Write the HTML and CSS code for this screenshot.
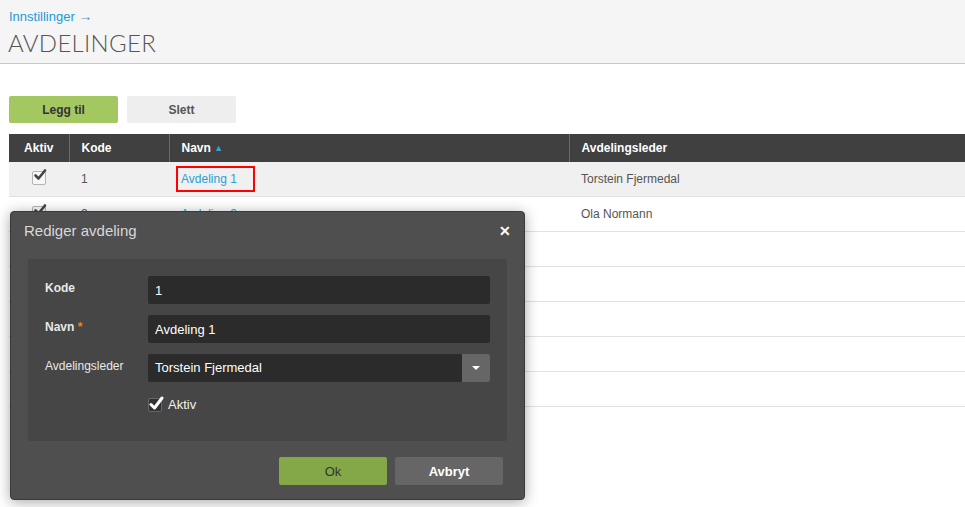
FILE: index.html
```html
<!DOCTYPE html>
<html lang="no">
<head>
    <meta charset="UTF-8">
    <title>Avdelinger</title>
    <link rel="stylesheet" href="styles.css">
</head>
<body>

    <div class="page-header">
        <div class="breadcrumb"><a href="#">Innstillinger</a> <span class="crumb-arrow">&rarr;</span></div>
        <h1>AVDELINGER</h1>
    </div>

    <div class="toolbar">
        <button class="btn btn-add">Legg til</button>
        <button class="btn btn-delete">Slett</button>
    </div>

    <div class="table-wrap">
        <table class="grid">
            <colgroup>
                <col class="col-active">
                <col class="col-code">
                <col class="col-name">
                <col>
            </colgroup>
            <thead>
                <tr>
                    <th class="center">Aktiv</th>
                    <th>Kode</th>
                    <th>Navn <span class="sort-arrow">&#9650;</span></th>
                    <th>Avdelingsleder</th>
                </tr>
            </thead>
            <tbody>
                <tr class="selected">
                    <td class="center"><span class="check"><svg viewBox="0 0 14 14" width="14" height="14"><path d="M2.5 7.5 L5.5 10.5 L12 2.5" fill="none" stroke="#444" stroke-width="2.6" stroke-linecap="round" stroke-linejoin="round"/></svg></span></td>
                    <td>1</td>
                    <td><a href="#" class="name-link highlighted">Avdeling 1</a></td>
                    <td>Torstein Fjermedal</td>
                </tr>
                <tr>
                    <td class="center"><span class="check"><svg viewBox="0 0 14 14" width="14" height="14"><path d="M2.5 7.5 L5.5 10.5 L12 2.5" fill="none" stroke="#444" stroke-width="2.6" stroke-linecap="round" stroke-linejoin="round"/></svg></span></td>
                    <td>2</td>
                    <td><a href="#" class="name-link">Avdeling 2</a></td>
                    <td>Ola Normann</td>
                </tr>
                <tr><td></td><td></td><td></td><td></td></tr>
                <tr><td></td><td></td><td></td><td></td></tr>
                <tr><td></td><td></td><td></td><td></td></tr>
                <tr><td></td><td></td><td></td><td></td></tr>
                <tr><td></td><td></td><td></td><td></td></tr>
            </tbody>
        </table>
    </div>

    <!-- Dialog for redigering -->
    <div class="dialog">
        <div class="dialog-header">
            <span class="dialog-title">Rediger avdeling</span>
            <button class="dialog-close">&#10005;</button>
        </div>
        <div class="dialog-body">
            <div class="form-row">
                <label class="strong">Kode</label>
                <input type="text" value="1">
            </div>
            <div class="form-row">
                <label class="strong">Navn <span class="required">*</span></label>
                <input type="text" value="Avdeling 1">
            </div>
            <div class="form-row">
                <label>Avdelingsleder</label>
                <div class="select">
                    <span class="select-value">Torstein Fjermedal</span>
                    <span class="select-btn"><svg viewBox="0 0 8 4" width="8" height="4"><path d="M0 0 H8 L4 4 Z" fill="#fff"/></svg></span>
                </div>
            </div>
            <div class="form-row check-row">
                <span class="dark-check"><svg viewBox="0 0 16 16" width="16" height="16"><path d="M3 8.5 L6.5 12 L14 2" fill="none" stroke="#fff" stroke-width="3" stroke-linecap="round" stroke-linejoin="round"/></svg></span>
                <span class="check-label">Aktiv</span>
            </div>
        </div>
        <div class="dialog-footer">
            <button class="btn btn-ok">Ok</button>
            <button class="btn btn-cancel">Avbryt</button>
        </div>
    </div>

</body>
</html>
```

FILE: styles.css
```css
html, body {
    height: 100%;
}

body {
    margin: 0;
    font-family: "Liberation Sans", Arial, sans-serif;
    font-size: 12px;
    color: #555;
    background: #fff;
    position: relative;
    overflow: hidden;
}

.page-header {
    background: #f5f5f5;
    border-bottom: 1px solid #c8c8c8;
    height: 64px;
    padding: 0 9px;
    box-sizing: border-box;
}

.breadcrumb {
    padding-top: 8px;
    font-size: 13px;
    line-height: 16px;
}

.breadcrumb a {
    color: #1b9ad6;
    text-decoration: none;
}

.breadcrumb .crumb-arrow {
    color: #5a8fc0;
    font-size: 14px;
}

.page-header h1 {
    margin: 3px 0 0 -1px;
    font-family: Lato, "Open Sans", sans-serif;
    font-weight: 300;
    font-size: 24px;
    letter-spacing: 0.3px;
    line-height: 30px;
    color: #555;
}

.toolbar {
    display: flex;
    gap: 9px;
    padding: 32px 0 0 9px;
}

.btn {
    font-family: "Liberation Sans", Arial, sans-serif;
    font-weight: bold;
    font-size: 12px;
    border: none;
    border-radius: 2px;
    width: 109px;
    height: 27px;
    cursor: pointer;
}

.btn-add {
    background: #a3c862;
    color: #333;
}

.btn-delete {
    background: #eee;
    color: #555;
}

.table-wrap {
    margin: 11px 0 0 9px;
}

.grid {
    width: 100%;
    border-collapse: collapse;
    table-layout: fixed;
}

.grid col.col-active {
    width: 60px;
}

.grid col.col-code {
    width: 100px;
}

.grid col.col-name {
    width: 400px;
}

.grid th {
    background: #404040;
    color: #fff;
    font-weight: bold;
    text-align: left;
    height: 28px;
    padding: 0 12px;
    border-left: 1px solid #6a6a6a;
}

.grid th:first-child {
    border-left: none;
}

.grid .center {
    text-align: center;
    padding: 0;
}

.sort-arrow {
    color: #3aa3d8;
    font-size: 9px;
    vertical-align: 1px;
}

.grid td {
    height: 34px;
    padding: 0 12px;
    border-bottom: 1px solid #e2e2e2;
    color: #555;
}

.grid tr.selected td {
    background: #f0f0f0;
}

.check {
    display: inline-block;
    width: 12px;
    height: 12px;
    border: 1px solid #b5b5b5;
    border-radius: 2px;
    background: #f8f8f8;
    position: relative;
    vertical-align: -1px;
}

.check svg {
    position: absolute;
    left: 0;
    top: -4px;
}

.name-link {
    color: #2c9fd3;
    text-decoration: none;
}

.name-link.highlighted {
    display: inline-block;
    padding: 4px 16px 4px 3px;
    margin-left: -5px;
    border: 2px solid #f00;
    line-height: 14px;
}

/* Dialog over tabellen */
.dialog {
    position: absolute;
    left: 10px;
    top: 211px;
    width: 515px;
    height: 289px;
    box-sizing: border-box;
    background: #4f4f4f;
    border: 1px solid #3a3a3a;
    border-radius: 4px;
    box-shadow: 0 2px 14px rgba(0, 0, 0, 0.35);
    padding: 0 17px;
}

.dialog-header {
    display: flex;
    justify-content: space-between;
    align-items: center;
    height: 37px;
    margin: 0 -4px;
}

.dialog-title {
    color: #d8d8d8;
    font-size: 15px;
}

.dialog-close {
    background: none;
    border: none;
    color: #fff;
    font-size: 14px;
    font-weight: bold;
    padding: 0;
    cursor: pointer;
}

.dialog-body {
    margin-top: 10px;
    background: #464646;
    border-radius: 2px;
    padding: 17px 17px 0 17px;
    height: 182px;
    box-sizing: border-box;
}

.form-row {
    display: flex;
    align-items: flex-start;
    margin-bottom: 11px;
}

.form-row label {
    width: 103px;
    flex: none;
    color: #e8e8e8;
    font-size: 12px;
    line-height: 28px;
    margin-top: -2px;
}

.form-row label.strong {
    font-weight: bold;
}

.required {
    color: #e48a1c;
}

.form-row input {
    flex: 1;
    height: 28px;
    box-sizing: border-box;
    background: #2b2b2b;
    border: none;
    border-radius: 2px;
    color: #fff;
    font-family: "Liberation Sans", Arial, sans-serif;
    font-size: 13px;
    padding: 0 7px;
    outline: none;
}

.select {
    flex: 1;
    height: 28px;
    display: flex;
    background: #2b2b2b;
    border-radius: 2px;
    overflow: hidden;
}

.select-value {
    flex: 1;
    color: #fff;
    font-size: 13px;
    line-height: 28px;
    padding-left: 7px;
}

.select-btn {
    width: 28px;
    background: #666;
    display: flex;
    align-items: center;
    justify-content: center;
}

.check-row {
    padding-left: 103px;
    padding-top: 4px;
    align-items: center;
}

.dark-check {
    width: 12px;
    height: 12px;
    border: 1px solid #666;
    border-radius: 2px;
    background: #333;
    position: relative;
}

.dark-check svg {
    position: absolute;
    left: -1px;
    top: -3px;
}

.check-label {
    color: #f0f0f0;
    font-size: 13px;
    margin-left: 6px;
}

.dialog-footer {
    display: flex;
    justify-content: flex-end;
    gap: 8px;
    margin-top: 16px;
    margin-right: 4px;
}

.btn-ok {
    background: #84a848;
    color: #333;
    font-weight: normal;
    font-size: 13px;
    width: 108px;
    height: 28px;
}

.btn-cancel {
    background: #666;
    color: #fff;
    font-size: 13px;
    width: 108px;
    height: 28px;
}
```
